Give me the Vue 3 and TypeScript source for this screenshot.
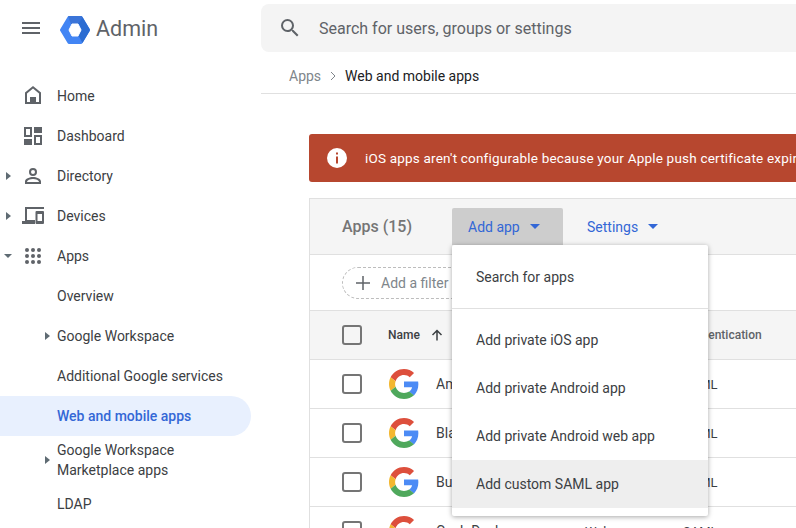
<script setup lang="ts">
interface NavItem { label: string; icon?: string; caret?: 'right' | 'down'; sub?: boolean; active?: boolean; tall?: boolean }
const nav: NavItem[] = [
  { label: 'Home', icon: 'home' },
  { label: 'Dashboard', icon: 'dash' },
  { label: 'Directory', icon: 'person', caret: 'right' },
  { label: 'Devices', icon: 'devices', caret: 'right' },
  { label: 'Apps', icon: 'apps', caret: 'down' },
  { label: 'Overview', sub: true },
  { label: 'Google Workspace', sub: true, caret: 'right' },
  { label: 'Additional Google services', sub: true },
  { label: 'Web and mobile apps', sub: true, active: true },
  { label: 'Google Workspace Marketplace apps', sub: true, caret: 'right', tall: true },
  { label: 'LDAP', sub: true },
]
const rows = [
  { name: 'Am', type: '', auth: 'SAML' },
  { name: 'Bla', type: '', auth: 'SAML' },
  { name: 'Bu', type: '', auth: 'SAML' },
  { name: 'Cash Desk', type: 'Web', auth: 'SAML' },
]
const menu = ['Add private iOS app', 'Add private Android app', 'Add private Android web app', 'Add custom SAML app']
const dots = [6, 12, 18].flatMap((y) => [6, 12, 18].map((x) => ({ x, y })))
</script>

<template>
  <div class="page">
    <aside class="side">
      <div class="brand">
        <svg class="burger" width="18" height="12" viewBox="0 0 18 12"><path d="M0 0h18v2H0zM0 5h18v2H0zM0 10h18v2H0z" fill="#5f6368" /></svg>
        <svg class="logo" width="30" height="28" viewBox="0 0 30 28">
          <path d="M9 1.500h12L28.500 14 21 26.500H9L1.500 14z" fill="#4285f4" stroke="#4285f4" stroke-width="3" stroke-linejoin="round" />
          <path d="M8 0.500Q8.500 0 9 0h12q1 0 1.500 1L19 8h-8z" fill="#3a74d8" />
          <path d="M22.500 1l7 11.800q.7 1.200 0 2.400l-7 11.800-4-7.500 3-6-3-6z" fill="#2b6cd2" />
          <path d="M12 8h6l3 6-3 6h-6l-3-6z" fill="#fff" stroke="#fff" stroke-width="1" stroke-linejoin="round" />
        </svg>
        <span class="brand-name">Admin</span>
      </div>
      <nav class="nav">
        <div v-for="n in nav" :key="n.label" class="nav-row" :class="{ sub: n.sub, active: n.active, tall: n.tall }">
          <span v-if="n.caret" class="caret" :class="n.caret"></span>
          <svg v-if="n.icon" class="nav-icon" width="24" height="24" viewBox="0 0 24 24" fill="#5f6368">
            <path v-if="n.icon === 'home'" fill-rule="evenodd" d="M12 2 4 8.500V20h16V8.500zM6 9.500l6-5 6 5V18h-3v-5H9v5H6z" />
            <path v-else-if="n.icon === 'dash'" fill-rule="evenodd" d="M3 3h8v10H3zM5 5v6h4V5zM13 3h8v6h-8zM13 11h8v10h-8zM15 13v6h4v-6zM3 15h8v6H3z" />
            <path v-else-if="n.icon === 'person'" fill-rule="evenodd" d="M12 4a4 4 0 1 0 0 8 4 4 0 0 0 0-8zm0 2a2 2 0 1 1 0 4 2 2 0 0 1 0-4zM12 13c-3.300 0-8 1.600-8 4.500V20h16v-2.500c0-2.900-4.700-4.500-8-4.500zm0 2c3 0 5.700 1.400 6 2.800v.2H6v-.2c.3-1.400 3-2.800 6-2.800z" />
            <path v-else-if="n.icon === 'devices'" fill-rule="evenodd" d="M4 3h19v2H6v11h8v4H1v-3h3zM15.500 7H22a1 1 0 0 1 1 1v11a1 1 0 0 1-1 1h-6.500a1 1 0 0 1-1-1V8a1 1 0 0 1 1-1zm1 3v7H21v-7z" />
            <template v-else>
              <circle v-for="d in dots" :key="d.x + '-' + d.y" :cx="d.x" :cy="d.y" r="2" />
            </template>
          </svg>
          <span class="nav-label">{{ n.label }}</span>
        </div>
      </nav>
    </aside>

    <main class="main">
      <div class="search">
        <svg width="24" height="24" viewBox="0 0 24 24" fill="#5f6368"><path d="M15.500 14h-.79l-.28-.27A6.470 6.470 0 0 0 16 9.500 6.500 6.500 0 1 0 9.500 16c1.610 0 3.090-.59 4.230-1.570l.27.28v.79l5 4.990L20.490 19zm-6 0C7.010 14 5 11.990 5 9.500S7.010 5 9.500 5 14 7.010 14 9.500 11.990 14 9.500 14z" /></svg>
        <span class="search-text">Search for users, groups or settings</span>
      </div>
      <div class="crumbs">
        <span class="crumb-a">Apps</span>
        <svg width="8" height="10" viewBox="0 0 8 10"><path d="M2 1l4 4-4 4" fill="none" stroke="#80868b" stroke-width="1" /></svg>
        <span class="crumb-b">Web and mobile apps</span>
      </div>
      <div class="content">
        <div class="banner">
          <svg width="22" height="22" viewBox="0 0 22 22"><circle cx="11" cy="11" r="10" fill="#fff" /><path d="M10 5.500h2v2h-2zM10 9.500h2v7h-2z" fill="#b7472f" /></svg>
          <span class="banner-text">iOS apps aren't configurable because your Apple push certificate expired</span>
        </div>
        <section class="card">
          <div class="card-head">
            <span class="card-title">Apps (15)</span>
            <div class="head-btn pressed"><span>Add app</span><i class="tri"></i></div>
            <div class="head-btn"><span>Settings</span><i class="tri"></i></div>
          </div>
          <div class="filter-row">
            <div class="filter">
              <svg width="14" height="14" viewBox="0 0 14 14"><path d="M6.250 0h1.500v14h-1.500zM0 6.250h14v1.500H0z" fill="#5f6368" /></svg>
              <span>Add a filter</span>
            </div>
          </div>
          <div class="thead">
            <span class="check"></span>
            <div class="th-col">
              <span class="th-name">Name</span>
              <svg width="12" height="12" viewBox="0 0 12 12"><path d="M6 11.500V1.500M1.500 6 6 1.500 10.500 6" fill="none" stroke="#3c4043" stroke-width="1.500" /></svg>
            </div>
            <span class="th-auth">Authentication</span>
          </div>
          <div v-for="r in rows" :key="r.name" class="row">
            <span class="check"></span>
            <svg class="g" width="30" height="30" viewBox="0 0 48 48">
              <path fill="#dd4f3c" d="M24 9.500c3.540 0 6.710 1.220 9.210 3.600l6.850-6.850C35.900 2.380 30.470 0 24 0 14.620 0 6.510 5.380 2.560 13.220l7.980 6.190C12.430 13.720 17.740 9.500 24 9.500z" />
              <path fill="#4c8bf5" d="M46.980 24.550c0-1.570-.15-3.090-.38-4.550H24v9.020h12.940c-.58 2.960-2.260 5.480-4.780 7.180l7.730 6c4.510-4.180 7.090-10.360 7.090-17.650z" />
              <path fill="#f3b72f" d="M10.530 28.590c-.48-1.450-.76-2.990-.76-4.590s.27-3.140.76-4.590l-7.980-6.190C.92 16.460 0 20.120 0 24c0 3.880.92 7.540 2.560 10.780z" />
              <path fill="#4fa85c" d="M24 48c6.480 0 11.930-2.130 15.890-5.810l-7.730-6c-2.150 1.450-4.920 2.300-8.160 2.300-6.260 0-11.570-4.220-13.470-9.910l-7.980 6.190C6.510 42.620 14.620 48 24 48z" />
            </svg>
            <span class="cell-name">{{ r.name }}</span>
            <span class="cell-type">{{ r.type }}</span>
            <span class="cell-auth">{{ r.auth }}</span>
          </div>
        </section>
      </div>
      <div class="menu">
        <div class="menu-search">Search for apps</div>
        <div class="menu-list">
          <div v-for="(m, i) in menu" :key="m" class="menu-item" :class="{ hover: i === 3 }">{{ m }}</div>
        </div>
      </div>
    </main>
  </div>
</template>

<style>
html, body { margin: 0; overflow: hidden; background: #fff; }
</style>

<style scoped>
.page { width: 796px; height: 528px; display: flex; overflow: hidden; font-family: Roboto, "Liberation Sans", sans-serif; color: #3c4043; }
.side { width: 261px; flex: none; }
.brand { height: 56px; display: flex; align-items: center; padding-left: 22px; }
.burger { margin-right: 20px; }
.logo { margin: 3px 6px 0 0; }
.brand-name { font-size: 21.500px; color: #5f6368; }
.nav { padding-top: 20px; }
.nav-row { position: relative; height: 40px; width: 251px; box-sizing: border-box; display: flex; align-items: center; padding-left: 21px; font-size: 14px; }
.nav-row.sub { padding-left: 57px; }
.nav-row.active { background: #e8f0fe; color: #3367d6; border-radius: 0 20px 20px 0; font-weight: 500; }
.nav-row.tall { height: 48px; line-height: 20px; padding-right: 60px; }
.nav-icon { margin-right: 12px; flex: none; }
.caret { position: absolute; }
.caret.right { left: 6px; border-left: 5px solid #5f6b73; border-top: 4px solid transparent; border-bottom: 4px solid transparent; }
.caret.down { left: 4px; border-top: 4px solid #5f6b73; border-left: 4.500px solid transparent; border-right: 4.500px solid transparent; }
.sub .caret.right { left: 45px; }
.main { position: relative; flex: 1; min-width: 0; }
.search { margin-top: 4px; height: 48px; background: #f4f4f4; border-radius: 8px 0 0 8px; display: flex; align-items: center; padding-left: 17px; gap: 17px; }
.search-text { font-size: 16px; color: #5f6368; }
.crumbs { height: 42px; box-sizing: border-box; padding: 6px 0 0 28px; border-bottom: 1px solid #e0e0e0; display: flex; align-items: center; gap: 8px; font-size: 14px; }
.crumb-a { color: #80868b; }
.crumb-b { color: #202124; }
.content { padding: 40px 0 0 48px; width: 700px; }
.banner { height: 48px; background: #b7472f; border-radius: 3px; display: flex; align-items: center; padding-left: 17px; gap: 17px; color: #fff; font-size: 13.500px; letter-spacing: 0.2px; white-space: nowrap; overflow: hidden; }
.card { margin-top: 16px; border: 1px solid #e0e0e0; border-right: 0; }
.card-head { height: 56px; background: #f5f5f5; border-bottom: 1px solid #e0e0e0; display: flex; align-items: center; box-sizing: border-box; padding-left: 32px; }
.card-title { font-size: 16px; font-weight: 500; color: #757575; width: 110px; }
.head-btn { height: 37px; display: flex; align-items: center; padding: 0 16px; gap: 10px; color: #3367d6; font-size: 14px; width: 111px; box-sizing: border-box; border-radius: 2px 2px 0 0; }
.head-btn.pressed { background: #cdcdcd; margin-right: 8px; align-self: flex-start; margin-top: 9px; }
.tri { display: block; width: 0; height: 0; border-top: 5px solid #3367d6; border-left: 5.500px solid transparent; border-right: 5.500px solid transparent; }
.filter-row { height: 56px; box-sizing: border-box; border-bottom: 1px solid #e0e0e0; display: flex; align-items: center; padding-left: 32px; }
.filter { height: 32px; width: 160px; box-sizing: border-box; border: 1px dashed #bdbdbd; border-radius: 16px; display: flex; align-items: center; gap: 11px; padding-left: 13px; font-size: 14px; color: #80868b; }
.thead { height: 49px; box-sizing: border-box; background: #f5f5f5; border-bottom: 1px solid #e0e0e0; display: flex; align-items: center; padding-left: 32px; }
.th-col { width: 321px; box-sizing: border-box; padding-left: 26px; display: flex; align-items: center; gap: 11px; flex: none; }
.th-name { font-size: 12px; font-weight: 500; color: #3c4043; }
.th-auth { font-size: 12px; font-weight: 500; color: #5f6368; }
.check { width: 20px; height: 20px; box-sizing: border-box; border: 2px solid #757575; border-radius: 3px; flex: none; background: #fff; }
.thead .check { background: transparent; }
.row { height: 49px; box-sizing: border-box; border-bottom: 1px solid #e0e0e0; display: flex; align-items: center; padding-left: 32px; font-size: 13px; color: #3c4043; }
.g { margin-left: 27px; flex: none; }
.cell-name { margin-left: 17px; width: 149px; flex: none; font-size: 14px; }
.cell-type { width: 98px; flex: none; }
.menu { position: absolute; left: 191px; top: 245px; width: 256px; height: 271px; background: #fff; border-radius: 2px; box-shadow: 0 1px 5px rgba(0, 0, 0, 0.35); font-size: 14px; color: #3c4043; }
.menu-search { height: 64px; box-sizing: border-box; border-bottom: 1px solid #e0e0e0; padding: 0 24px; display: flex; align-items: center; }
.menu-list { padding-top: 7px; }
.menu-item { height: 48px; padding: 0 24px; display: flex; align-items: center; }
.menu-item.hover { background: #eee; }
</style>
